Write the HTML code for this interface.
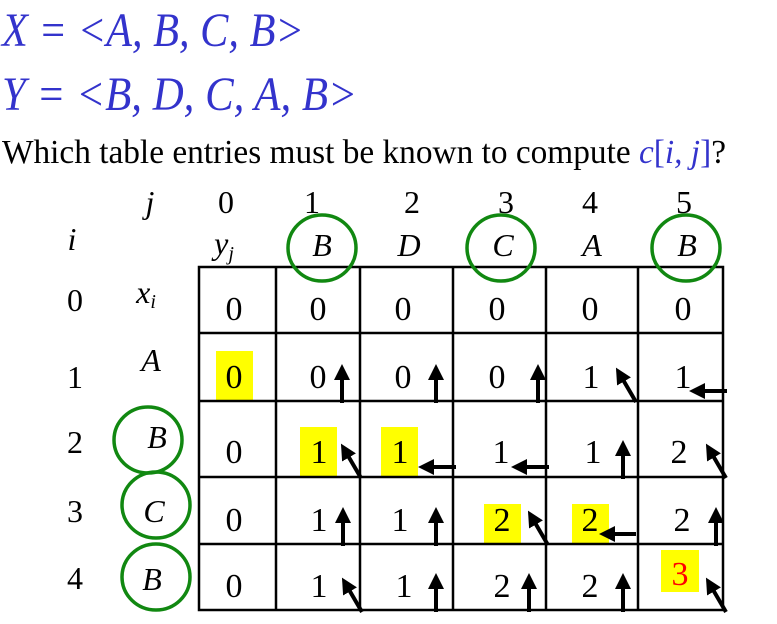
<!DOCTYPE html>
<html><head><meta charset="utf-8"><style>
html,body{margin:0;padding:0;background:#fff;width:777px;height:624px;overflow:hidden}
svg{display:block}
text{font-family:"Liberation Serif",serif}
</style></head><body>
<svg width="777" height="624" viewBox="0 0 777 624" xmlns="http://www.w3.org/2000/svg">
<defs>
<marker id="ah" markerWidth="4" markerHeight="4" refX="1" refY="2" orient="auto" markerUnits="strokeWidth">
<path d="M0,0 L4,2 L0,4 Z" fill="#000"/></marker>
</defs>
<g fill="#3333cc" font-style="italic" font-size="48">
<text x="2" y="46" textLength="302" lengthAdjust="spacingAndGlyphs">X = &lt;A, B, C, B&gt;</text>
<text x="2" y="110" textLength="355" lengthAdjust="spacingAndGlyphs">Y = &lt;B, D, C, A, B&gt;</text>
</g>
<text x="2" y="163" font-size="34" textLength="724" lengthAdjust="spacingAndGlyphs">Which table entries must be known to compute <tspan fill="#3333cc" font-style="italic">c</tspan><tspan fill="#3333cc">[</tspan><tspan fill="#3333cc" font-style="italic">i, j</tspan><tspan fill="#3333cc">]</tspan>?</text>

<g font-size="32" text-anchor="middle">
<text x="150" y="213" font-style="italic">j</text>
<text x="226" y="213">0</text><text x="312" y="213">1</text><text x="412" y="213">2</text>
<text x="506" y="213">3</text><text x="590" y="213">4</text><text x="684" y="213">5</text>
<text x="72" y="250" font-style="italic">i</text>
<text x="224" y="254" font-style="italic">y<tspan font-size="20" dy="6">j</tspan></text>
<text x="322" y="256" font-style="italic">B</text><text x="409" y="256" font-style="italic">D</text>
<text x="503" y="256" font-style="italic">C</text><text x="592" y="256" font-style="italic">A</text>
<text x="687" y="256" font-style="italic">B</text>
<text x="75" y="311">0</text><text x="75" y="388">1</text><text x="75" y="453">2</text>
<text x="75" y="522">3</text><text x="75" y="589">4</text>
<text x="146" y="303" font-style="italic">x<tspan font-size="20" dy="5">i</tspan></text>
<text x="151" y="371" font-style="italic">A</text>
<text x="157" y="448" font-style="italic">B</text>
<text x="154" y="522" font-style="italic">C</text>
<text x="152" y="590" font-style="italic">B</text>
</g>

<g fill="#ffff00">
<rect x="216" y="351" width="37" height="49"/>
<rect x="300" y="427" width="37" height="50"/>
<rect x="381" y="427" width="37" height="50"/>
<rect x="484" y="504" width="37" height="40"/>
<rect x="572" y="504" width="37" height="40"/>
<rect x="661" y="550" width="38" height="42"/>
</g>

<g stroke="#000" stroke-width="2.5" fill="none">
<rect x="199" y="267" width="524" height="343"/>
<line x1="276" y1="267" x2="276" y2="610"/><line x1="360" y1="267" x2="360" y2="610"/>
<line x1="453" y1="267" x2="453" y2="610"/><line x1="546" y1="267" x2="546" y2="610"/>
<line x1="638" y1="267" x2="638" y2="610"/>
<line x1="199" y1="333" x2="723" y2="333"/><line x1="199" y1="401" x2="723" y2="401"/>
<line x1="199" y1="477" x2="723" y2="477"/><line x1="199" y1="544" x2="723" y2="544"/>
</g>

<g fill="none" stroke="#118811" stroke-width="3.5">
<ellipse cx="322" cy="248" rx="34" ry="33"/>
<ellipse cx="501" cy="248" rx="34" ry="33"/>
<ellipse cx="686" cy="248" rx="34" ry="33"/>
<ellipse cx="148" cy="440" rx="34" ry="33"/>
<ellipse cx="156" cy="505" rx="34" ry="33"/>
<ellipse cx="156" cy="577" rx="34" ry="33"/>
</g>

<g font-size="34" text-anchor="middle">
<text x="234" y="320">0</text><text x="318" y="320">0</text><text x="403" y="320">0</text>
<text x="497" y="320">0</text><text x="590" y="320">0</text><text x="683" y="320">0</text>
<text x="234" y="388">0</text><text x="318" y="388">0</text><text x="403" y="388">0</text>
<text x="497" y="388">0</text><text x="591" y="388">1</text><text x="683" y="388">1</text>
<text x="234" y="463">0</text><text x="319" y="463">1</text><text x="400" y="463">1</text>
<text x="501" y="463">1</text><text x="593" y="463">1</text><text x="679" y="463">2</text>
<text x="234" y="531">0</text><text x="319" y="531">1</text><text x="400" y="531">1</text>
<text x="502" y="531">2</text><text x="590" y="531">2</text><text x="682" y="531">2</text>
<text x="234" y="597">0</text><text x="319" y="597">1</text><text x="404" y="597">1</text>
<text x="502" y="597">2</text><text x="590" y="597">2</text><text x="680" y="585" fill="#ff0000">3</text>
</g>

<g stroke="#000" stroke-width="4" fill="none" marker-end="url(#ah)">
<line x1="342" y1="403" x2="342" y2="376"/>
<line x1="436" y1="403" x2="436" y2="376"/>
<line x1="538" y1="403" x2="538" y2="376"/>
<line x1="636" y1="402" x2="622" y2="378"/>
<line x1="727" y1="391" x2="701" y2="391"/>
<line x1="361" y1="478" x2="347" y2="454"/>
<line x1="456" y1="467" x2="430" y2="467"/>
<line x1="549" y1="467" x2="523" y2="467"/>
<line x1="623" y1="479" x2="623" y2="452"/>
<line x1="726" y1="478" x2="712" y2="454"/>
<line x1="343" y1="546" x2="343" y2="519"/>
<line x1="436" y1="546" x2="436" y2="519"/>
<line x1="548" y1="545" x2="534" y2="521"/>
<line x1="636" y1="534" x2="611" y2="534"/>
<line x1="716" y1="546" x2="716" y2="519"/>
<line x1="362" y1="612" x2="348" y2="588"/>
<line x1="436" y1="612" x2="436" y2="585"/>
<line x1="529" y1="612" x2="529" y2="585"/>
<line x1="623" y1="612" x2="623" y2="585"/>
<line x1="726" y1="612" x2="712" y2="588"/>
</g>
</svg>
</body></html>
